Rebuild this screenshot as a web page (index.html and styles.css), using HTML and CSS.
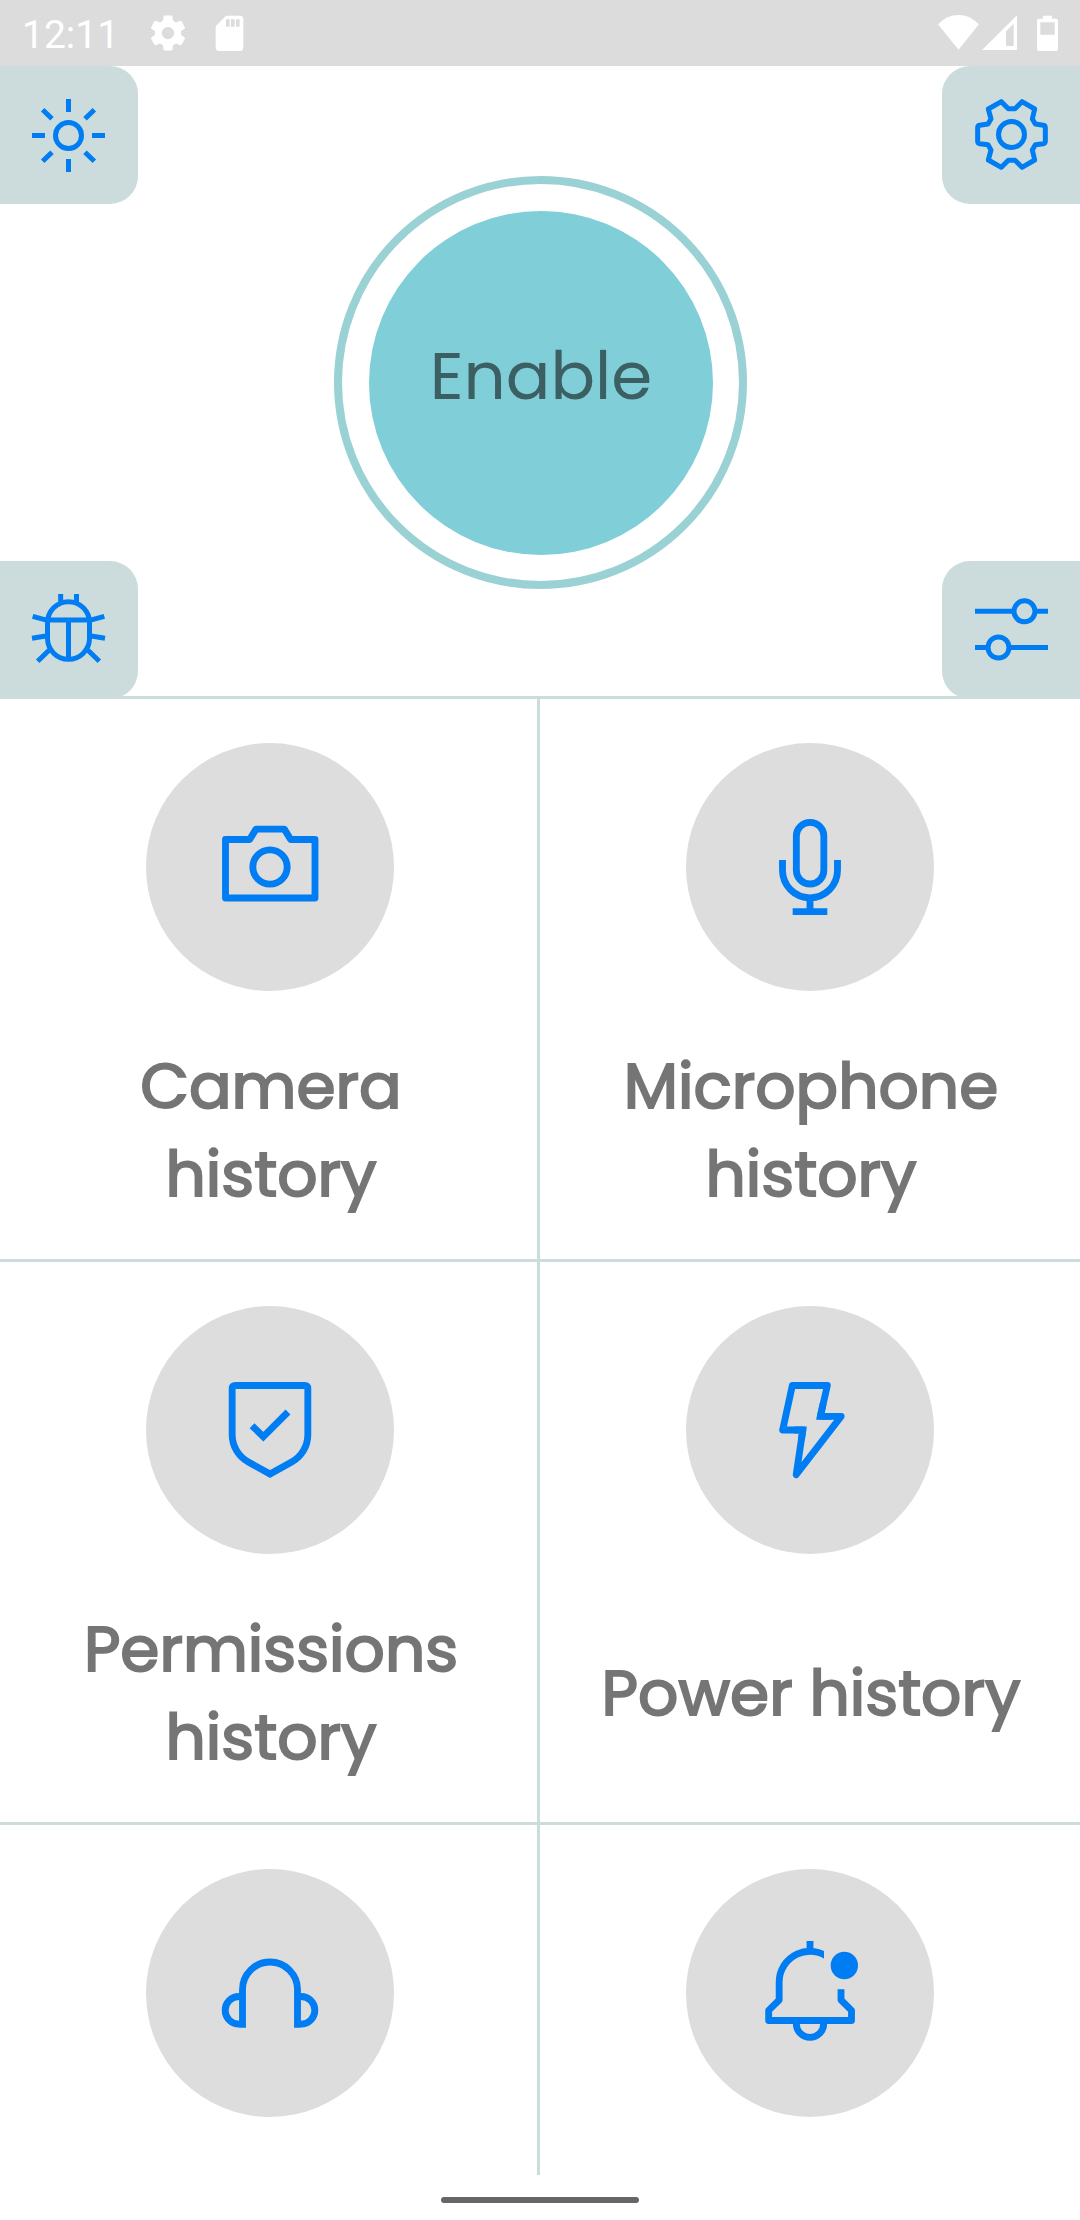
FILE: index.html
```html
<!DOCTYPE html>
<html lang="en">
<head>
<meta charset="utf-8">
<title>Privacy dashboard</title>
<link rel="stylesheet" href="styles.css">
</head>
<body>
<div class="screen">
  <header class="status">
    <span class="clock">12:11</span>
    <svg class="st-gear" viewBox="0 0 24 24"><path d="M19.43 12.98c.04-.32.07-.64.07-.98s-.03-.66-.07-.98l2.11-1.65c.19-.15.24-.42.12-.64l-2-3.46c-.12-.22-.39-.3-.61-.22l-2.49 1c-.52-.4-1.08-.73-1.69-.98l-.38-2.65C14.46 2.18 14.25 2 14 2h-4c-.25 0-.46.18-.49.42l-.38 2.65c-.61.25-1.17.59-1.69.98l-2.49-1c-.23-.09-.49 0-.61.22l-2 3.46c-.13.22-.07.49.12.64l2.11 1.65c-.04.32-.07.65-.07.98s.03.66.07.98l-2.11 1.65c-.19.15-.24.42-.12.64l2 3.46c.12.22.39.3.61.22l2.49-1c.52.4 1.08.73 1.69.98l.38 2.65c.03.24.24.42.49.42h4c.25 0 .46-.18.49-.42l.38-2.65c.61-.25 1.17-.59 1.69-.98l2.49 1c.23.09.49 0 .61-.22l2-3.46c.12-.22.07-.49-.12-.64l-2.11-1.65zM12 15.5c-1.93 0-3.5-1.57-3.5-3.5s1.57-3.5 3.5-3.5 3.5 1.57 3.5 3.5-1.57 3.5-3.5 3.5z"/></svg>
    <svg class="st-sd" viewBox="645 45 90 108"><path fill-rule="evenodd" d="M678 47H720Q730 47 730 58V142Q730 153 720 153H657Q647 153 647 142V79ZM678 58V80H689V58ZM693 58V80H704V58ZM708 58V80H719V58Z"/></svg>
    <span class="spacer"></span>
    <svg class="st-wifi" viewBox="111 45 129 108"><path d="M175.500 149L114 73Q141 45 175.500 45T237 73Z"/></svg>
    <svg class="st-signal" viewBox="243 45 108 108"><path fill-rule="evenodd" d="M246 150L351 46V150ZM318 94V138H341V71Z"/></svg>
    <svg class="st-battery" viewBox="408 45 69 108"><path fill-rule="evenodd" d="M429 47H456V56H468Q474 56 474 62V146Q474 153 468 153H418Q411 153 411 146V62Q411 56 418 56H429ZM421 67V104H464V67Z"/></svg>
  </header>

  <section class="hero">
    <button class="corner left top-left" aria-label="Brightness">
      <svg class="icon small" viewBox="0 198 414 414"><circle cx="205.500" cy="406.500" r="39"/><path d="M205.500 297V336M205.500 477V516M96 406.500H135M276 406.500H315M128 329L156 356.500M283 329L255 356.500M128 484L156 456.500M283 484L255 456.500"/></svg>
    </button>
    <button class="corner right top-right" aria-label="Settings">
      <svg class="icon small round" viewBox="126 198 414 414"><circle cx="334.500" cy="403.500" r="39"/><path d="M304 305L325 326H345L366 305L404 327L397 357L406 372L430 376Q436 377 436 383V424Q436 430 430 431L406 434L397 450L404 480L366 502L345 481H325L304 502L265 480L273 450L264 434L239 431Q233 430 233 424V383Q233 377 239 376L264 372L273 357L265 327Z"/></svg>
    </button>
    <div class="ring"><button class="enable">Enable</button></div>
    <button class="corner left bottom-left" aria-label="Report a bug">
      <svg class="icon small" viewBox="0 33 414 414"><path d="M142.500 218A63 63 0 0 1 268.500 218V265A63 63 0 0 1 142.500 265ZM143 210H268M205.500 210V328M182 132V160M229.500 132V160M98 199L142 211M313 199L269 211M96 265L142 257.500M315 265L269 257.500M113 334L151 297M298 334L260 297"/></svg>
    </button>
    <button class="corner right bottom-right" aria-label="Filters">
      <svg class="icon small" viewBox="66 33 414 414"><circle cx="313.500" cy="184" r="31.500"/><circle cx="235.500" cy="292.500" r="31.500"/><path d="M165 184H278M349 184H384M165 292.500H200M271 292.500H384"/></svg>
    </button>
  </section>

  <main class="grid">
    <article class="tile">
      <div class="disc"><svg class="icon round" viewBox="48 39 744 744"><path d="M286.500 328.500H359L378 297.500H463L482 328.500H555V504H286.500Z"/><circle cx="420" cy="411" r="51.500"/></svg></div>
      <h2 class="label">Camera<br>history</h2>
    </article>
    <article class="tile">
      <div class="disc"><svg class="icon" viewBox="48 39 744 744"><rect x="379" y="277" width="82.500" height="185" rx="41.250"/><path d="M337.500 390V421A82.500 82.500 0 0 0 502.500 421V390M420 504V545M368 545H472"/></svg></div>
      <h2 class="label">Microphone<br>history</h2>
    </article>
    <article class="tile">
      <div class="disc"><svg class="icon" viewBox="48 48 744 744"><path d="M316 286.500H524Q533.500 286.500 533.500 296V434C533.500 468 515 499 485 516L420 552L355 516C325 499 306.500 468 306.500 434V296Q306.500 286.500 316 286.500ZM366 407L400 440L474 366"/></svg></div>
      <h2 class="label">Permissions<br>history</h2>
    </article>
    <article class="tile">
      <div class="disc"><svg class="icon" viewBox="48 48 744 744"><path class="soft" d="M367 286.500H472L451 379H513.500L378.500 554L398.500 420H338Z"/><path d="M459.500 341L451 379H485M372 420H398.500L394 450"/></svg></div>
      <h2 class="label">Power history</h2>
    </article>
    <article class="tile">
      <div class="disc"><svg class="icon" viewBox="48 57 744 744"><path d="M337.500 533V418.500A82.500 82.500 0 0 1 502.500 418.500V533M338 522.500H327A41 41 0 0 1 327 439.500H338M502 439.500H513A41 41 0 0 1 513 522.500H502"/></svg></div>
    </article>
    <article class="tile">
      <div class="disc"><svg class="icon round" viewBox="48 57 744 744"><clipPath id="bell"><path d="M250 250H462V400H600V600H250Z"/></clipPath><path clip-path="url(#bell)" d="M480 326A92.500 92.500 0 0 0 327.500 397V450L296 481V511.500H544.500V481L513 450V418M420 273V305M379 521A41 41 0 0 0 461 521"/><circle class="solid" cx="523" cy="346.500" r="41"/></svg></div>
    </article>
  </main>

  <footer class="nav"><span class="pill"></span></footer>
</div>
</body>
</html>
```
FILE: styles.css
```css
* { box-sizing: border-box; }

body {
  margin: 0;
  background: #fff;
  font-family: Poppins, Inter, "Open Sans", sans-serif;
}

button {
  border: 0;
  padding: 0;
  margin: 0;
  font: inherit;
}

svg { display: block; flex: none; }

.screen {
  width: 1080px;
  height: 2220px;
  display: flex;
  flex-direction: column;
  overflow: hidden;
}

/* Status bar */
.status {
  height: 66px;
  flex: none;
  display: flex;
  align-items: center;
  padding: 0 21px 0 22px;
  background: #dcdcdc;
  fill: #fff;
}
.clock {
  width: 125px;
  font: 400 39px/46px Roboto, sans-serif;
  padding-top: 3px;
  color: #fff;
}
.st-gear { width: 42px; height: 42px; }
.st-sd { width: 30px; height: 36px; margin-left: 26px; }
.spacer { flex: 1; }
.st-wifi { width: 43px; height: 36px; }
.st-signal { width: 36px; height: 36px; margin-left: 1px; }
.st-battery { width: 23px; height: 36px; margin-left: 19px; }

/* Icons */
.icon {
  width: 100%;
  height: 100%;
  fill: none;
  stroke: #007df2;
  stroke-width: 20.6;
}
.icon.small { stroke-width: 15; }
.round, .soft { stroke-linejoin: round; }
.solid { fill: #007df2; stroke: none; }

/* Hero */
.hero {
  height: 633px;
  flex: none;
  display: grid;
  grid-template-columns: 138px 1fr 138px;
  grid-template-rows: 138px 1fr 138px;
  grid-template-areas:
    "tl ring tr"
    ".  ring ."
    "bl ring br";
  box-shadow: inset 0 -3px #ccdcdc;
}
.corner { background: #ccdcdc; }
.left { border-radius: 0 28px 28px 0; }
.right { border-radius: 28px 0 0 28px; }
.top-left { grid-area: tl; }
.top-right { grid-area: tr; }
.bottom-left { grid-area: bl; }
.bottom-right { grid-area: br; }
.ring {
  grid-area: ring;
  place-self: center;
  width: 413px;
  height: 413px;
  margin-left: 1px;
  padding: 27px;
  border: 8px solid #9ad1d4;
  border-radius: 50%;
}
.enable {
  display: block;
  width: 344px;
  height: 344px;
  padding-bottom: 14px;
  border-radius: 50%;
  background: #80ced7;
  color: #3c5f63;
  font-size: 66px;
}

/* Tiles */
.grid {
  height: 1476px;
  flex: none;
  display: grid;
  grid-template-columns: 540px 540px;
  grid-auto-rows: 563px;
  overflow: hidden;
}
.tile {
  padding-top: 44px;
  border-bottom: 3px solid #ccdcdc;
  display: flex;
  flex-direction: column;
  align-items: center;
}
.tile:nth-child(odd) { box-shadow: inset -3px 0 #ccdcdc; }
.disc {
  width: 248px;
  height: 248px;
  flex: none;
  border-radius: 50%;
  background: #ddd;
}
.label {
  height: 176px;
  margin: 51px 0 0;
  padding-left: 2px;
  display: flex;
  flex-direction: column;
  justify-content: center;
  text-align: center;
  white-space: nowrap;
  color: #757575;
  font-weight: 400;
  font-size: 63px;
  line-height: 88px;
  -webkit-text-stroke: 2px #757575;
}

/* Gesture bar */
.nav {
  flex: 1;
  display: flex;
  justify-content: center;
  align-items: center;
  padding-top: 4px;
}
.pill { width: 198px; height: 6px; border-radius: 3px; background: #666; }
```
